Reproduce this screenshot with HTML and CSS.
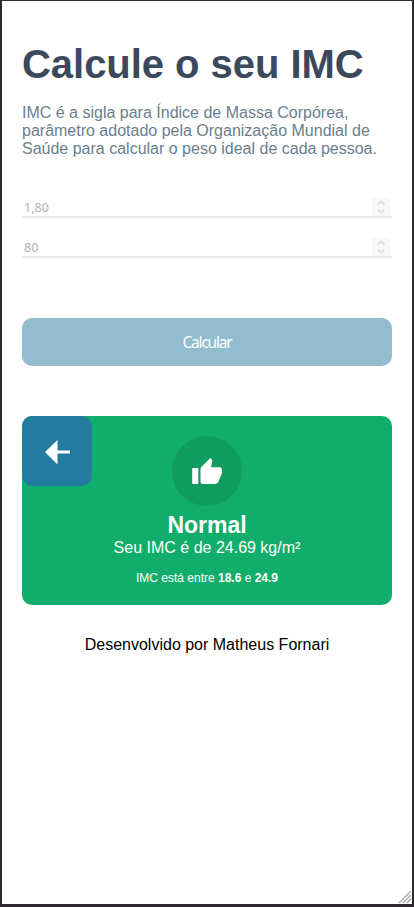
FILE: index.html
```html
<!DOCTYPE html>
<html lang="pt-BR">
<head>
<meta charset="utf-8">
<title>Calcule o seu IMC</title>
<link rel="stylesheet" href="styles.css">
</head>
<body>
<main class="page">
  <header>
    <h1>Calcule o seu IMC</h1>
    <p class="intro">IMC é a sigla para Índice de Massa Corpórea, parâmetro adotado pela Organização Mundial de Saúde para calcular o peso ideal de cada pessoa.</p>
  </header>
  <div class="field"><span>1,80</span>
    <svg class="spin" viewBox="0 0 18 18"><path d="M5.500 6.500 9 3.500l3.500 3M5.500 11.500 9 14.500l3.500-3"/></svg>
  </div>
  <div class="field"><span>80</span>
    <svg class="spin" viewBox="0 0 18 18"><path d="M5.500 6.500 9 3.500l3.500 3M5.500 11.500 9 14.500l3.500-3"/></svg>
  </div>
  <button class="calc" type="button">Calcular</button>
  <section class="card">
    <div class="back"><svg viewBox="0 0 70 70"><path d="M23 36 35.500 24v10.500H48v3H35.500V48.500Z"/></svg></div>
    <div class="thumb"><svg viewBox="0 0 70 70"><path d="M21 32h4.500q.8 0 .8.8v14.400q0 .8-.8.8H21q-.8 0-.8-.8V32.800q0-.8.8-.8ZM28.500 33.200q0-1.200.9-2.100L38.300 22l1.500 1.500q.7.700.5 1.700L39 31.200h8.300q2.700 0 2.700 2.800v2.600q0 .6-.2 1.100l-3.700 8.600q-.8 1.700-2.600 1.700H31q-2.500 0-2.500-2.500Z"/></svg></div>
    <h2>Normal</h2>
    <p class="value">Seu IMC é de 24.69 kg/m²</p>
    <p class="range">IMC está entre <b>18.6</b> e <b>24.9</b></p>
  </section>
  <footer>Desenvolvido por Matheus Fornari</footer>
  <svg class="grip" viewBox="0 0 14 14"><path d="M1 13 13 1M5 13l8-8M9 13l4-4"/></svg>
</main>
</body>
</html>
```
FILE: styles.css
```css
* { box-sizing: border-box; margin: 0; padding: 0; }
body { background: #fff; font-family: "Liberation Sans", Arial, sans-serif; font-size: 16px; }
.page {
  position: relative;
  height: 907px;
  padding: 40px 20px 0;
  border: solid #2b292d;
  border-width: 1px 2px 3px;
  overflow: hidden;
}
h1 { font-size: 40px; line-height: 46px; letter-spacing: -0.040px; color: #3a4a5c; white-space: nowrap; }
.intro { margin: 17px 0 38px; line-height: 18px; color: #6b7e8c; }
.field {
  height: 22px;
  margin-bottom: 18px;
  padding: 0 2px;
  display: flex;
  align-items: flex-start;
  justify-content: space-between;
  border-bottom: 2px solid #e3e8eb;
  font: 12.500px/24px "Noto Sans", sans-serif;
  color: #b0b0b0;
}
.spin { width: 18px; height: 18px; margin-top: 2px; background: #f8f8f8; }
.spin path { fill: none; stroke: #dedfe2; stroke-width: 1.800; }
.calc {
  display: block;
  width: 100%;
  height: 48px;
  margin-top: 60px;
  border: 0;
  border-radius: 10px;
  background: #91bdce;
  color: #fff;
  font: 15.500px "Noto Sans", sans-serif;
  letter-spacing: -1.200px;
}
.card {
  position: relative;
  height: 189px;
  margin-top: 50px;
  padding-top: 20px;
  border-radius: 10px;
  background: #11ad6a;
  color: #fff;
  text-align: center;
}
.back { position: absolute; left: 0; top: 0; width: 70px; height: 70px; border-radius: 10px; background: #237c9f; }
.thumb { width: 70px; height: 70px; margin: 0 auto; border-radius: 50%; background: #109b5f; }
.back svg, .thumb svg { display: block; width: 70px; height: 70px; fill: #fff; }
h2 { margin-top: 6px; font-size: 23px; line-height: 26px; }
.value { margin-top: 1px; line-height: 18px; }
.range { margin-top: 14px; font-size: 12px; line-height: 14px; }
footer { margin-top: 31px; line-height: 18px; text-align: center; color: #000; }
.grip { position: absolute; right: 0; bottom: 0; width: 14px; height: 14px; }
.grip path { stroke: #aaa; stroke-width: 1.400; fill: none; }
```
